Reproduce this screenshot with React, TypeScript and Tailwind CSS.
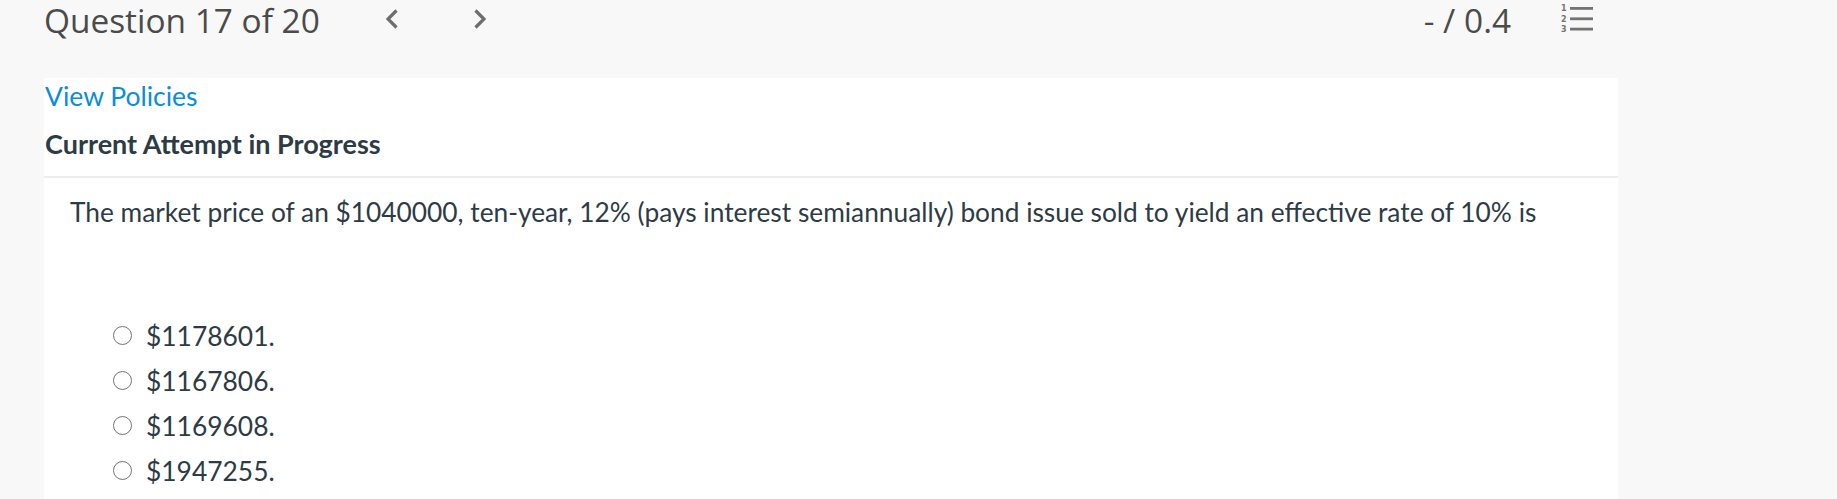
const options = ['$1178601.', '$1167806.', '$1169608.', '$1947255.']

function ChevronLeft() {
  return (
    <svg width="12" height="20" viewBox="0 0 12 20" fill="none" aria-hidden="true">
      <polyline points="10.5,1.5 2,10 10.5,18.5" stroke="#6d6d6d" strokeWidth="3.2" />
    </svg>
  )
}

function ChevronRight() {
  return (
    <svg width="12" height="20" viewBox="0 0 12 20" fill="none" aria-hidden="true">
      <polyline points="1.5,1.5 10,10 1.5,18.5" stroke="#6d6d6d" strokeWidth="3.2" />
    </svg>
  )
}

function NumberedListIcon() {
  return (
    <svg width="33" height="30" viewBox="0 0 33 30" aria-hidden="true">
      <rect x="10" y="3" width="23" height="2.8" fill="#737373" />
      <rect x="10" y="13.4" width="23" height="2.8" fill="#737373" />
      <rect x="10" y="23.7" width="23" height="2.8" fill="#737373" />
      <g fill="#737373" fontSize="8" fontWeight="700" fontFamily="'DejaVu Sans', sans-serif">
        <text x="1" y="7">1</text>
        <text x="1" y="17.5">2</text>
        <text x="1" y="28">3</text>
      </g>
    </svg>
  )
}

export default function App() {
  return (
    <div className="w-[1837px] h-[499px] bg-[#f8f8f8] overflow-hidden flex flex-col">
      {/* Top bar */}
      <header className="h-[78px] flex items-start pl-[44px] pr-[244px] font-['Open_Sans',sans-serif] text-[#4b4b4b]">
        <span className="w-[342px] text-[33.4px] leading-[40px] whitespace-nowrap">Question 17 of 20</span>
        <button type="button" className="w-[88px] h-[38px] flex items-center" aria-label="Previous question">
          <ChevronLeft />
        </button>
        <button type="button" className="h-[38px] flex items-center" aria-label="Next question">
          <ChevronRight />
        </button>
        <div className="flex-1" />
        <span className="text-[33.4px] leading-[40px] whitespace-nowrap">- / 0.4</span>
        <span className="ml-[49px] mt-[4px]">
          <NumberedListIcon />
        </span>
      </header>

      {/* Question card */}
      <main className="ml-[44px] w-[1574px] flex-1 bg-white font-['Lato',sans-serif] text-[#2d3b45]">
        <div className="pl-[1px] pb-[14px] border-b-2 border-[#ededed]">
          <a href="#" className="block text-[26.5px] leading-[36px] text-[#0b8ddb]">View Policies</a>
          <p className="mt-[12px] text-[27px] leading-[36px] font-bold">Current Attempt in Progress</p>
        </div>

        <p className="pt-[16px] pl-[26px] text-[26.3px] leading-[36px] whitespace-nowrap">
          The market price of an $1040000, ten-year, 12% (pays interest semiannually) bond issue sold to yield an effective rate of 10% is
        </p>

        <ul className="mt-[83px] pl-[69px]">
          {options.map((opt) => (
            <li key={opt} className="h-[45px] flex items-center gap-[14px]">
              <span className="w-[19px] h-[19px] rounded-full border-[1.7px] border-[#757575] bg-white shrink-0" />
              <span className="text-[26.4px] leading-[36px]">{opt}</span>
            </li>
          ))}
        </ul>
      </main>
    </div>
  )
}
